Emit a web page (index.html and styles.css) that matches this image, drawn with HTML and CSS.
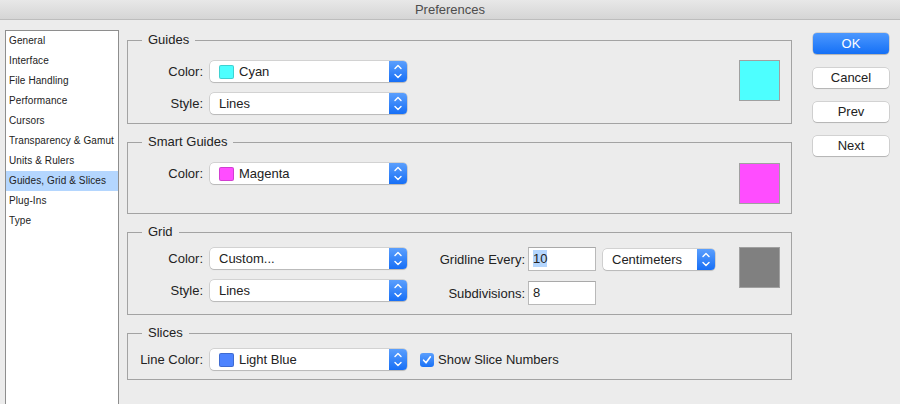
FILE: index.html
```html
<!DOCTYPE html>
<html>
<head>
<meta charset="utf-8">
<title>Preferences</title>
<link rel="stylesheet" href="styles.css">
</head>
<body>
<div class="titlebar">Preferences</div>
<div class="main">
  <nav class="sidebar">
    <div class="item">General</div>
    <div class="item">Interface</div>
    <div class="item">File Handling</div>
    <div class="item">Performance</div>
    <div class="item">Cursors</div>
    <div class="item">Transparency &amp; Gamut</div>
    <div class="item">Units &amp; Rulers</div>
    <div class="item sel">Guides, Grid &amp; Slices</div>
    <div class="item">Plug-Ins</div>
    <div class="item">Type</div>
  </nav>

  <div class="content">
    <section class="group">
      <div class="legend">Guides</div>
      <div class="body pad20">
        <div class="rows">
          <div class="row">
            <span class="label">Color:</span>
            <div class="popup"><span class="chip chip-cyan"></span><span class="val">Cyan</span>
              <span class="stepper"><svg width="18" height="21" viewBox="0 0 18 21"><path d="M6 7.5 L9 4.5 L12 7.5 M6 13.5 L9 16.5 L12 13.5" fill="none" stroke="#fff" stroke-width="1.4" stroke-linecap="round" stroke-linejoin="round"/></svg></span>
            </div>
          </div>
          <div class="row">
            <span class="label">Style:</span>
            <div class="popup"><span class="val">Lines</span>
              <span class="stepper"><svg width="18" height="21" viewBox="0 0 18 21"><path d="M6 7.5 L9 4.5 L12 7.5 M6 13.5 L9 16.5 L12 13.5" fill="none" stroke="#fff" stroke-width="1.4" stroke-linecap="round" stroke-linejoin="round"/></svg></span>
            </div>
          </div>
        </div>
        <div class="swatch swatch-cyan up1"></div>
      </div>
    </section>

    <section class="group">
      <div class="legend">Smart Guides</div>
      <div class="body pad20">
        <div class="rows">
          <div class="row">
            <span class="label">Color:</span>
            <div class="popup"><span class="chip chip-magenta"></span><span class="val">Magenta</span>
              <span class="stepper"><svg width="18" height="21" viewBox="0 0 18 21"><path d="M6 7.5 L9 4.5 L12 7.5 M6 13.5 L9 16.5 L12 13.5" fill="none" stroke="#fff" stroke-width="1.4" stroke-linecap="round" stroke-linejoin="round"/></svg></span>
            </div>
          </div>
        </div>
        <div class="swatch swatch-magenta"></div>
      </div>
    </section>

    <section class="group">
      <div class="legend">Grid</div>
      <div class="body pad15">
        <div class="rows">
          <div class="row">
            <span class="label">Color:</span>
            <div class="popup"><span class="val">Custom...</span>
              <span class="stepper"><svg width="18" height="21" viewBox="0 0 18 21"><path d="M6 7.5 L9 4.5 L12 7.5 M6 13.5 L9 16.5 L12 13.5" fill="none" stroke="#fff" stroke-width="1.4" stroke-linecap="round" stroke-linejoin="round"/></svg></span>
            </div>
          </div>
          <div class="row">
            <span class="label">Style:</span>
            <div class="popup"><span class="val">Lines</span>
              <span class="stepper"><svg width="18" height="21" viewBox="0 0 18 21"><path d="M6 7.5 L9 4.5 L12 7.5 M6 13.5 L9 16.5 L12 13.5" fill="none" stroke="#fff" stroke-width="1.4" stroke-linecap="round" stroke-linejoin="round"/></svg></span>
            </div>
          </div>
        </div>
        <div class="rows2">
          <div class="row2">
            <span class="label2">Gridline Every:</span>
            <div class="field"><span class="selected">10</span></div>
            <div class="popup popup-unit"><span class="val">Centimeters</span>
              <span class="stepper"><svg width="18" height="21" viewBox="0 0 18 21"><path d="M6 7.5 L9 4.5 L12 7.5 M6 13.5 L9 16.5 L12 13.5" fill="none" stroke="#fff" stroke-width="1.4" stroke-linecap="round" stroke-linejoin="round"/></svg></span>
            </div>
          </div>
          <div class="row2">
            <span class="label2">Subdivisions:</span>
            <div class="field">8</div>
          </div>
        </div>
        <div class="swatch swatch-gray up1"></div>
      </div>
    </section>

    <section class="group">
      <div class="legend">Slices</div>
      <div class="body pad15">
        <div class="rows">
          <div class="row">
            <span class="label">Line Color:</span>
            <div class="popup"><span class="chip chip-blue"></span><span class="val">Light Blue</span>
              <span class="stepper"><svg width="18" height="21" viewBox="0 0 18 21"><path d="M6 7.5 L9 4.5 L12 7.5 M6 13.5 L9 16.5 L12 13.5" fill="none" stroke="#fff" stroke-width="1.4" stroke-linecap="round" stroke-linejoin="round"/></svg></span>
            </div>
            <span class="checkbox"><svg width="14" height="14" viewBox="0 0 14 14"><path d="M3.6 7.2 L6 9.8 L10.4 3.8" fill="none" stroke="#fff" stroke-width="1.6" stroke-linecap="round" stroke-linejoin="round"/></svg></span>
            <span class="check-label">Show Slice Numbers</span>
          </div>
        </div>
      </div>
    </section>
  </div>

  <div class="buttons">
    <div class="btn btn-primary">OK</div>
    <div class="btn">Cancel</div>
    <div class="btn">Prev</div>
    <div class="btn">Next</div>
  </div>
</div>
</body>
</html>
```

FILE: styles.css
```css
html, body {
  margin: 0;
  padding: 0;
  height: 100%;
  overflow: hidden;
}
body {
  background: #ececec;
  font-family: "Liberation Sans", Arial, sans-serif;
  font-size: 13px;
  color: #222;
}

.titlebar {
  height: 19px;
  line-height: 19px;
  border-bottom: 1px solid #bdbdbd;
  background: linear-gradient(#e8e8e8, #d5d5d5);
  text-align: center;
  font-size: 13px;
  color: #4d4d4d;
}

.main {
  display: flex;
  align-items: flex-start;
  padding: 10px 0 0 5px;
}

/* sidebar */
.sidebar {
  width: 114px;
  height: 374px;
  box-sizing: border-box;
  border: 1px solid #8e8e8e;
  border-bottom: none;
  background: #fff;
  flex-shrink: 0;
}
.item {
  height: 20px;
  line-height: 20px;
  padding-left: 3px;
  font-size: 10px;
  letter-spacing: 0.1px;
  color: #222;
  white-space: nowrap;
}
.item.sel {
  background: #b4d6fe;
}

/* content */
.content {
  width: 665px;
  margin: 10px 0 0 8px;
  display: flex;
  flex-direction: column;
  gap: 18px;
  flex-shrink: 0;
}
.group {
  border: 1px solid #a3a3a3;
  display: flex;
  flex-direction: column;
}
.legend {
  align-self: flex-start;
  height: 16px;
  line-height: 16px;
  margin: -9px 0 -7px 14px;
  padding: 0 6px;
  background: #ececec;
  font-size: 13px;
  color: #222;
}
.body {
  display: flex;
  align-items: flex-start;
  padding-right: 11px;
  padding-bottom: 9px;
}
.pad20 { padding-top: 20px; }
.pad15 { padding-top: 15px; }

.rows {
  display: flex;
  flex-direction: column;
  gap: 11px;
}
.row {
  display: flex;
  align-items: center;
  height: 21px;
}
.label {
  width: 75px;
  margin-right: 7px;
  text-align: right;
  white-space: nowrap;
}

.popup {
  width: 197px;
  height: 21px;
  box-sizing: border-box;
  display: flex;
  align-items: center;
  padding-left: 9px;
  background: #fff;
  border-radius: 4px;
  box-shadow: 0 0 0 0.5px rgba(0, 0, 0, 0.22), 0 1px 1px rgba(0, 0, 0, 0.12);
  white-space: nowrap;
}
.popup .val {
  color: #222;
}
.stepper {
  margin-left: auto;
  width: 18px;
  height: 21px;
  border-radius: 0 4px 4px 0;
  background: linear-gradient(#5b9ffd, #176ff6);
  display: flex;
}
.chip {
  width: 15px;
  height: 14px;
  box-sizing: border-box;
  border-radius: 2px;
  margin-right: 5px;
  border: 1px solid rgba(0, 0, 0, 0.18);
}
.chip-cyan { background: #4dffff; }
.chip-magenta { background: #ff4dff; }
.chip-blue { background: #4d83ff; }

.swatch {
  width: 41px;
  height: 41px;
  box-sizing: border-box;
  border: 1px solid #a0a0a0;
  margin-left: auto;
}
.up1 { margin-top: -1px; }
.swatch-cyan { background: #4dffff; }
.swatch-magenta { background: #ff4dff; }
.swatch-gray { background: #808080; }

/* grid second column */
.rows2 {
  display: flex;
  flex-direction: column;
  gap: 10px;
  margin-left: 18px;
  margin-top: -1px;
}
.row2 {
  display: flex;
  align-items: center;
  height: 24px;
}
.label2 {
  width: 100px;
  margin-right: 3px;
  text-align: right;
  white-space: nowrap;
}
.field {
  width: 68px;
  height: 24px;
  box-sizing: border-box;
  background: #fff;
  border: 1px solid #b9b9b9;
  border-top-color: #a9a9a9;
  padding-left: 4px;
  line-height: 22px;
  color: #222;
}
.selected {
  background: #b4d6fe;
  padding: 1px 0;
}
.popup-unit {
  width: 112px;
  margin-left: 7px;
}

/* checkbox */
.checkbox {
  width: 14px;
  height: 14px;
  margin-left: 13px;
  border-radius: 3px;
  background: linear-gradient(#5b9ffd, #1a72f6);
  display: flex;
}
.check-label {
  margin-left: 4px;
  white-space: nowrap;
}

/* buttons */
.buttons {
  width: 76px;
  margin: 3px 0 0 21px;
  display: flex;
  flex-direction: column;
  gap: 14px;
  flex-shrink: 0;
}
.btn {
  height: 20px;
  line-height: 20px;
  text-align: center;
  background: #fff;
  border-radius: 4px;
  box-shadow: 0 0 0 0.5px rgba(0, 0, 0, 0.22), 0 1px 1px rgba(0, 0, 0, 0.14);
  color: #222;
}
.btn-primary {
  height: 21px;
  line-height: 21px;
  background: linear-gradient(#4c98fe, #1570f6);
  color: #fff;
}
```
